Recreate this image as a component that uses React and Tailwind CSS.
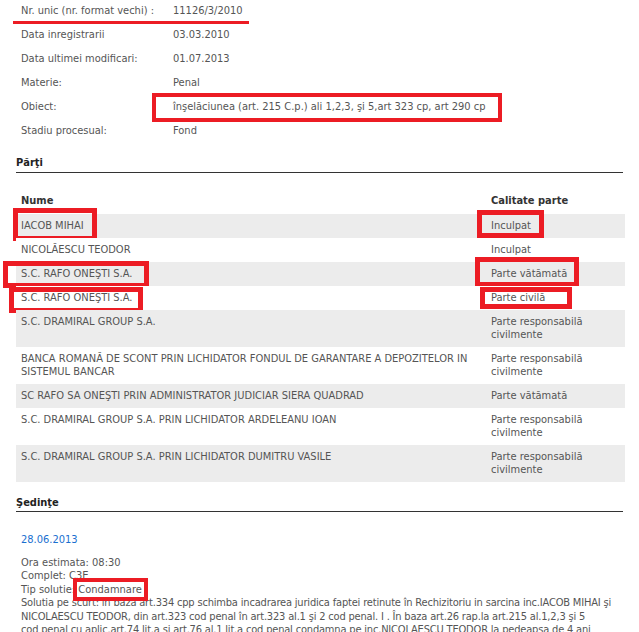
import React from 'react';

const FONT = {
  fontFamily: '"DejaVu Sans Condensed", "Liberation Sans", Arial, sans-serif',
};

const info = [
  { label: 'Nr. unic (nr. format vechi) :', value: '11126/3/2010', mark: 'underline' },
  { label: 'Data inregistrarii', value: '03.03.2010' },
  { label: 'Data ultimei modificari:', value: '01.07.2013' },
  { label: 'Materie:', value: 'Penal' },
  { label: 'Obiect:', value: 'înşelăciunea (art. 215 C.p.) ali 1,2,3, şi 5,art 323 cp, art 290 cp', mark: 'box' },
  { label: 'Stadiu procesual:', value: 'Fond' },
];

// boxes are offsets from the row's top-left corner
const parti = [
  {
    name: 'IACOB MIHAI',
    role: 'Inculpat',
    boxes: [
      'left-[-3px] top-[-6px] w-[84px] h-[33px]',
      'left-[461px] top-[-4px] w-[67px] h-[28px]',
    ],
  },
  { name: 'NICOLĂESCU TEODOR', role: 'Inculpat' },
  {
    name: 'S.C. RAFO ONEŞTI S.A.',
    role: 'Parte vătămată',
    boxes: [
      'left-[-13px] top-[-1px] w-[146px] h-[27px]',
      'left-[459px] top-[-5px] w-[104px] h-[30px]',
    ],
  },
  {
    name: 'S.C. RAFO ONEŞTI S.A.',
    role: 'Parte civilă',
    boxes: [
      'left-[-7px] top-[1px] w-[134px] h-[26px]',
      'left-[464px] top-[1px] w-[92px] h-[22px]',
    ],
  },
  { name: ['S.C. DRAMIRAL GROUP S.A.'], role: ['Parte responsabilă', 'civilmente'] },
  {
    name: ['BANCA ROMANĂ DE SCONT PRIN LICHIDATOR FONDUL DE GARANTARE A DEPOZITELOR IN', 'SISTEMUL BANCAR'],
    role: ['Parte responsabilă', 'civilmente'],
  },
  { name: 'SC RAFO SA ONEŞTI PRIN ADMINISTRATOR JUDICIAR SIERA QUADRAD', role: 'Parte vătămată' },
  { name: ['S.C. DRAMIRAL GROUP S.A. PRIN LICHIDATOR ARDELEANU IOAN'], role: ['Parte responsabilă', 'civilmente'] },
  { name: ['S.C. DRAMIRAL GROUP S.A. PRIN LICHIDATOR DUMITRU VASILE'], role: ['Parte responsabilă', 'civilmente'] },
];

const Lines = ({ text }) =>
  Array.isArray(text) ? text.map((t, i) => <div key={i} className="whitespace-nowrap">{t}</div>) : <div className="whitespace-nowrap">{text}</div>;

const SectionTitle = ({ children, className = '' }) => (
  <div className={`mx-[16px] border-b border-[#333] font-bold leading-[13px] text-[#222] ${className}`}>{children}</div>
);

export default function App() {
  return (
    <div className="min-h-screen w-[639px] overflow-hidden bg-white text-[11px] text-[#555]" style={FONT}>
      {/* dosar info */}
      <div>
        {info.map((row) => (
          <div key={row.label} className="relative flex pl-[21px] pt-[4px] pb-[7px] leading-[13px]">
            <div className="w-[152px] shrink-0">{row.label}</div>
            <div className="whitespace-nowrap">{row.value}</div>
            {row.mark === 'underline' && (
              <div className="absolute left-[13px] top-[21px] h-[3px] w-[236px] bg-[#ec1c24]" />
            )}
            {row.mark === 'box' && (
              <div className="absolute left-[152px] top-[-3px] h-[29px] w-[350px] border-[4px] border-[#ec1c24]" />
            )}
          </div>
        ))}
      </div>

      <SectionTitle className="mt-[12px] pb-[3px]">Părţi</SectionTitle>

      <div className="mx-[16px] w-[609px]">
        <div className="mt-[21px] grid grid-cols-[470px_1fr] pb-[7px] font-bold leading-[13px] text-[#333]">
          <div className="pl-[5px]">Nume</div>
          <div className="pl-[5px]">Calitate parte</div>
        </div>
        {parti.map((p, i) => (
          <div
            key={i}
            className={`relative grid grid-cols-[470px_1fr] pt-[5px] pb-[6px] leading-[13px] ${i % 2 === 0 ? 'bg-[#ececec]' : 'bg-white'}`}
          >
            <div className="pl-[5px]">
              <Lines text={p.name} />
            </div>
            <div className="pl-[5px]">
              <Lines text={p.role} />
            </div>
            {p.boxes?.map((b) => (
              <div key={b} className={`absolute border-[5px] border-[#ec1c24] ${b}`} />
            ))}
          </div>
        ))}
      </div>

      <SectionTitle className="mt-[14px] pb-[2px]">Şedinţe</SectionTitle>

      <div className="mx-[16px] pl-[5px]">
        <div className="mt-[21px] leading-[13px] text-[#1a6fcf]">28.06.2013</div>
        <div className="mt-[10px] leading-[13.4px]">
          <div>Ora estimata: 08:30</div>
          <div>Complet: C3E</div>
          <div className="relative">
            Tip solutie: Condamnare
            <div className="absolute left-[52px] top-[-5px] h-[23px] w-[75px] border-[4px] border-[#ec1c24]" />
          </div>
          <div className="whitespace-nowrap tracking-[-0.18px]">
            Solutia pe scurt: în baza art.334 cpp schimba incadrarea juridica faptei retinute în Rechizitoriu in sarcina inc.IACOB MIHAI şi
          </div>
          <div className="whitespace-nowrap tracking-[-0.18px]">
            NICOLAESCU TEODOR, din art.323 cod penal în art.323 al.1 şi 2 cod penal. I . În baza art.26 rap.la art.215 al.1,2,3 şi 5
          </div>
          <div className="whitespace-nowrap tracking-[-0.18px]">
            cod penal cu aplic.art.74 lit.a si art.76 al.1 lit.a cod penal condamna pe inc.NICOLAESCU TEODOR la pedeapsa de 4 ani
          </div>
        </div>
      </div>
    </div>
  );
}
